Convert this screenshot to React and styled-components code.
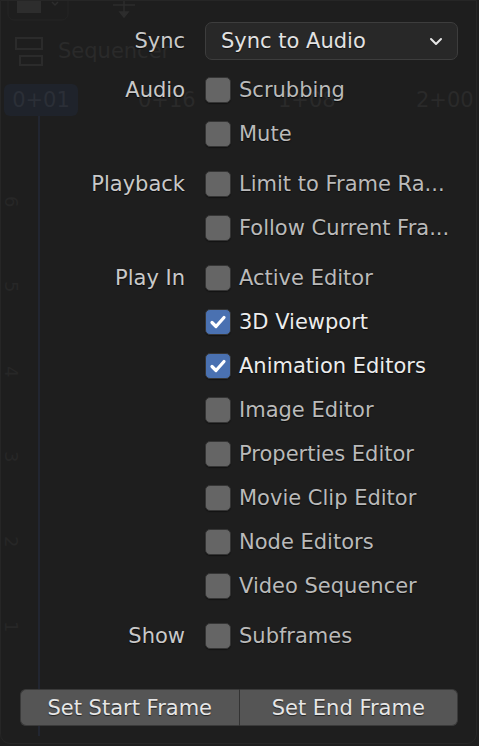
import React from "react";
import styled, { createGlobalStyle } from "styled-components";

const GlobalStyle = createGlobalStyle`
  html, body {
    margin: 0;
    padding: 0;
    background: #1e1e1e;
    font-family: "DejaVu Sans", "Liberation Sans", sans-serif;
  }
  * { box-sizing: border-box; }
`;

const Screen = styled.div`
  position: relative;
  width: 479px;
  height: 746px;
  overflow: hidden;
  background: #1e1e1e;
`;

/* faded editor that sits under the popup */
const Backdrop = styled.div`
  position: absolute;
  inset: 0;
  pointer-events: none;
  color: #2a2a2a;
  font-size: 21px;
`;

const Ghost = styled.div`
  position: absolute;
  left: ${(p) => p.x}px;
  top: ${(p) => p.y}px;
  line-height: 1;
  white-space: nowrap;
`;

const FrameBox = styled(Ghost)`
  width: 74px;
  height: 32px;
  border-radius: 6px;
  background: #1f232b;
  color: #2b2f37;
  display: flex;
  align-items: center;
  justify-content: center;
`;

const Playhead = styled.div`
  position: absolute;
  left: 38px;
  top: 116px;
  width: 2px;
  height: 620px;
  background: #222631;
`;

const ChannelNum = styled(Ghost)`
  transform: rotate(90deg);
  transform-origin: left top;
  font-size: 18px;
  color: #272727;
`;

const Panel = styled.div`
  position: relative;
  height: 744px;
  margin-right: 2px;
  border: 1px solid #262626;
  border-radius: 0 0 10px 10px;
  padding-top: 19px;
`;

const Form = styled.div`
  display: flex;
  flex-direction: column;
  gap: 6px;
`;

const Section = styled.div`
  display: flex;
  flex-direction: column;
`;

const Row = styled.div`
  display: grid;
  grid-template-columns: 184px 1fr;
  column-gap: 20px;
  align-items: center;
  height: ${(p) => p.h || 44}px;
  padding-right: 18px;
`;

const Label = styled.div`
  text-align: right;
  font-size: 21px;
  color: #c9c9c9;
  text-shadow: 0 1px 1px rgba(0, 0, 0, 0.7);
  white-space: nowrap;
`;

const Select = styled.div`
  height: 38px;
  border-radius: 7px;
  background: #282828;
  border: 1px solid #3d3d3d;
  display: flex;
  align-items: center;
  justify-content: space-between;
  padding: 0 14px 0 15px;
  font-size: 21px;
  color: #e2e2e2;
  text-shadow: 0 1px 1px rgba(0, 0, 0, 0.6);
`;

const Check = styled.label`
  display: flex;
  align-items: center;
  gap: 8px;
  font-size: 21px;
  white-space: nowrap;
  color: ${(p) => (p.on ? "#ececec" : "#bababa")};
  text-shadow: 0 1px 1px rgba(0, 0, 0, 0.7);
`;

const Box = styled.span`
  width: 26px;
  height: 26px;
  flex: none;
  border-radius: 5px;
  border: 1px solid #353535;
  background: ${(p) => (p.on ? "#4a71b1" : "#656565")};
  display: flex;
  align-items: center;
  justify-content: center;
  box-shadow: 0 1px 1px rgba(0, 0, 0, 0.4);
`;

const ButtonRow = styled.div`
  display: flex;
  margin: 31px 18px 0 19px;
  height: 37px;
`;

const Button = styled.div`
  flex: 1;
  display: flex;
  align-items: center;
  justify-content: center;
  background: #555555;
  border: 1px solid #3a3a3a;
  font-size: 21px;
  color: #e6e6e6;
  text-shadow: 0 1px 1px rgba(0, 0, 0, 0.6);
  border-radius: ${(p) => (p.first ? "6px 0 0 6px" : "0 6px 6px 0")};
  ${(p) => (p.first ? "border-right: 1px solid #333;" : "border-left: none;")}
`;

const Tick = () => (
  <svg width="18" height="16" viewBox="0 0 18 16">
    <polyline
      points="3,8.5 7,12.5 15,3.5"
      fill="none"
      stroke="#ffffff"
      strokeWidth="3.2"
      strokeLinecap="round"
      strokeLinejoin="round"
    />
  </svg>
);

const Chevron = () => (
  <svg width="14" height="9" viewBox="0 0 14 9">
    <polyline
      points="2,2 7,7 12,2"
      fill="none"
      stroke="#e6e6e6"
      strokeWidth="2"
      strokeLinecap="round"
      strokeLinejoin="round"
    />
  </svg>
);

const CheckRow = ({ label, text, on }) => (
  <Row>
    <Label>{label}</Label>
    <Check on={on}>
      <Box on={on}>{on && <Tick />}</Box>
      {text}
    </Check>
  </Row>
);

const playIn = [
  ["Active Editor", false],
  ["3D Viewport", true],
  ["Animation Editors", true],
  ["Image Editor", false],
  ["Properties Editor", false],
  ["Movie Clip Editor", false],
  ["Node Editors", false],
  ["Video Sequencer", false],
];

export default function App() {
  return (
    <Screen>
      <GlobalStyle />
      <Backdrop>
        <svg style={{ position: "absolute", left: 0, top: 0 }} width="479" height="120">
          <rect x="8" y="-6" width="60" height="26" rx="6" fill="none" stroke="#242424" />
          <rect x="17" y="0" width="24" height="13" fill="#2d2d2d" />
          <polyline points="52,2 55,5 58,2" fill="none" stroke="#2d2d2d" strokeWidth="1.5" />
          <g stroke="#2d2d2d" strokeWidth="1.5" fill="#2d2d2d">
            <line x1="113" y1="5" x2="135" y2="5" />
            <line x1="124" y1="0" x2="124" y2="13" />
            <polygon points="120,12 128,12 124,17" />
          </g>
          <rect x="16" y="38" width="26" height="11" fill="none" stroke="#2b2b2b" strokeWidth="2" />
          <rect x="20" y="56" width="22" height="9" fill="none" stroke="#2b2b2b" strokeWidth="2" />
        </svg>
        <Ghost x={58} y={41}>Sequencer</Ghost>
        <FrameBox x={4} y={84}>0+01</FrameBox>
        <Ghost x={138} y={90}>0+16</Ghost>
        <Ghost x={278} y={90}>1+08</Ghost>
        <Ghost x={416} y={90}>2+00</Ghost>
        <Playhead />
        {["6", "5", "4", "3", "2", "1"].map((n, i) => (
          <ChannelNum key={n} x={20} y={196 + i * 85}>{n}</ChannelNum>
        ))}
      </Backdrop>

      <Panel>
        <Form>
          <Row h={42}>
            <Label>Sync</Label>
            <Select>
              Sync to Audio
              <Chevron />
            </Select>
          </Row>
          <Section>
            <CheckRow label="Audio" text="Scrubbing" />
            <CheckRow text="Mute" />
          </Section>
          <Section>
            <CheckRow label="Playback" text="Limit to Frame Ra..." />
            <CheckRow text="Follow Current Fra..." />
          </Section>
          <Section>
            {playIn.map(([t, on], i) => (
              <CheckRow key={t} label={i === 0 ? "Play In" : ""} text={t} on={on} />
            ))}
          </Section>
          <Section>
            <CheckRow label="Show" text="Subframes" />
          </Section>
        </Form>
        <ButtonRow>
          <Button first>Set Start Frame</Button>
          <Button>Set End Frame</Button>
        </ButtonRow>
      </Panel>
    </Screen>
  );
}
